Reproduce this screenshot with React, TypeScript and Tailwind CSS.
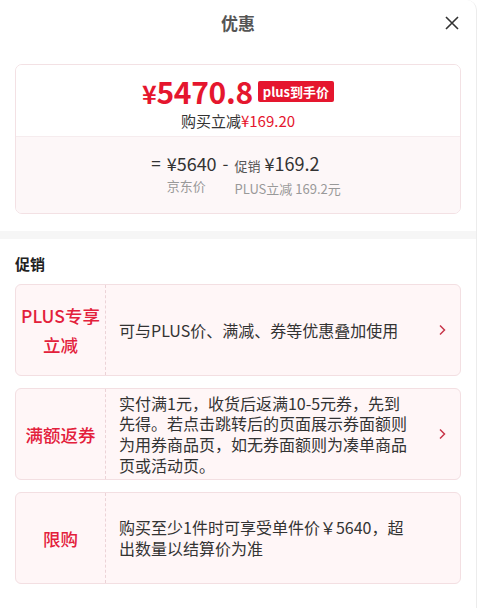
import React from 'react';

// Promotion rows shown under the 促销 heading
const promos = [
    {
        id: 'plus',
        label: ['PLUS专享', '立减'],
        text: '可与PLUS价、满减、券等优惠叠加使用',
        link: true
    },
    {
        id: 'coupon',
        label: ['满额返券'],
        text: '实付满1元，收货后返满10-5元券，先到先得。若点击跳转后的页面展示券面额则为用券商品页，如无券面额则为凑单商品页或活动页。',
        link: true
    },
    {
        id: 'limit',
        label: ['限购'],
        text: '购买至少1件时可享受单件价￥5640，超出数量以结算价为准',
        link: false
    }
];

const font = { fontFamily: '"Noto Sans CJK SC", "Noto Sans", sans-serif' };

function Chevron() {
    return (
        <svg width="8" height="12" viewBox="0 0 8 12" className="shrink-0">
            <polyline points="2,1.5 6.5,6 2,10.5" fill="none" stroke="#c8364a" strokeWidth="1.5" />
        </svg>
    );
}

export default function App() {
    return (
        <div className="w-[482px] h-[608px] bg-white overflow-hidden" style={font}>
            <div className="w-[477px] h-full bg-white border-r border-[#ececec] rounded-tr-[10px]">
                {/* Header */}
                <div className="relative h-[46px] flex items-center justify-center">
                    <h1 className="text-[17px] font-bold text-[#555]">优惠</h1>
                    <button className="absolute right-[15px] top-[14px] w-[18px] h-[18px] flex items-center justify-center">
                        <svg width="16" height="16" viewBox="0 0 16 16">
                            <path d="M2 2 L14 14 M14 2 L2 14" stroke="#333" strokeWidth="1.6" />
                        </svg>
                    </button>
                </div>

                {/* Price summary card */}
                <div className="px-[15px] pt-[18px] pb-[17px]">
                    <div className="border border-[#f3e1e4] rounded-[7px] overflow-hidden">
                        <div className="h-[71px] bg-white flex flex-col items-center pt-[9px]">
                            <div className="flex items-center gap-[5px] h-[34px]">
                                <span className="text-[#e5162e] font-bold text-[30px] leading-none tracking-[-0.3px]">
                                    <span className="text-[25px]">¥</span>5470.8
                                </span>
                                <span className="bg-[#e5162e] text-white text-[13px] font-bold leading-none px-[5px] py-[4px] rounded-[2px]">plus到手价</span>
                            </div>
                            <div className="text-[15px] text-[#333] leading-[20px] mt-[3px]">
                                购买立减<span className="text-[#e5162e]">¥169.20</span>
                            </div>
                        </div>
                        <div className="h-[77px] bg-[#fdf7f8] border-t border-[#f6ecee] flex justify-center pt-[14px]">
                            <div className="flex items-start text-[#333] ml-[16px]">
                                <span className="text-[17px] leading-[24px] mr-[6px]">=</span>
                                <div className="flex flex-col">
                                    <span className="text-[18px] leading-[24px]">¥5640</span>
                                    <span className="text-[13px] text-[#999] leading-[20px] mt-[1px]">京东价</span>
                                </div>
                                <span className="text-[17px] leading-[24px] mx-[6px]">-</span>
                                <div className="flex flex-col">
                                    <span className="text-[18px] leading-[24px]">
                                        <span className="text-[13px] text-[#555] mr-[4px]">促销</span>¥169.2
                                    </span>
                                    <span className="text-[13px] text-[#999] leading-[20px] mt-[1px]">PLUS立减 169.2元</span>
                                </div>
                            </div>
                        </div>
                    </div>
                </div>

                <div className="h-[8px] bg-[#f6f6f6]" />

                {/* Promotions */}
                <div className="px-[15px] pt-[14px]">
                    <h2 className="text-[15px] font-bold text-[#222] leading-[22px]">促销</h2>
                    <div className="mt-[9px] flex flex-col gap-[12px]">
                        {promos.map((p) => (
                            <div key={p.id} className="h-[92px] flex bg-[#fff6f7] border border-[#f3dfe2] rounded-[6px]">
                                <div className="w-[90px] shrink-0 flex flex-col items-center justify-center border-r border-dashed border-[#ecd3d7]">
                                    {p.label.map((l) => (
                                        <span key={l} className="text-[#e3203b] text-[17.5px] font-medium leading-[29px]">{l}</span>
                                    ))}
                                </div>
                                <div className="flex-1 flex items-center pl-[13px] pr-[14px]">
                                    <p className="w-[292px] text-[16px] text-[#333] leading-[20.7px]">{p.text}</p>
                                    <div className="flex-1 flex justify-end">
                                        {p.link && <Chevron />}
                                    </div>
                                </div>
                            </div>
                        ))}
                    </div>
                </div>
            </div>
        </div>
    );
}
